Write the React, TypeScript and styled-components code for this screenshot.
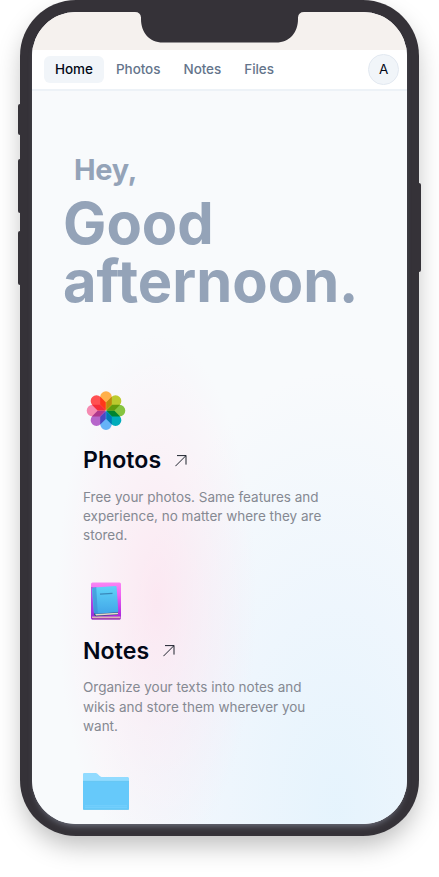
import React from "react";
import styled, { createGlobalStyle } from "styled-components";

const GlobalStyle = createGlobalStyle`
  * { box-sizing: border-box; }
  html, body { margin: 0; background: #fff; overflow: hidden; }
  body { font-family: Inter, "Liberation Sans", sans-serif; color: #020817; }
  h1, h2, p { margin: 0; }
`;

const Stage = styled.main`
  height: 877px;
  overflow: hidden;
`;

const Phone = styled.div`
  position: relative;
  width: 399px;
  height: 836px;
  margin: 0 20px;
  padding: 12px;
  border-radius: 56px;
  background: #353238;
  box-shadow: 0 12px 26px -3px rgba(0, 0, 0, 0.27);
`;

const SideButton = styled.span<{ $side: "left" | "right"; $top: number; $length: number }>`
  position: absolute;
  ${(p) => p.$side}: -2px;
  top: ${(p) => p.$top}px;
  width: 3px;
  height: ${(p) => p.$length}px;
  border-radius: ${(p) => (p.$side === "left" ? "2px 0 0 2px" : "0 2px 2px 0")};
  background: #353238;
`;

const Screen = styled.div`
  display: flex;
  flex-direction: column;
  height: 812px;
  overflow: hidden;
  border-radius: 44px;
  background: #f8fafc;
  box-shadow: 0 5px 6px -3px rgba(130, 135, 150, 0.75);
`;

const StatusBar = styled.div`
  flex: 0 0 38px;
  background: #f5f1ee;
`;

const Notch = styled.svg`
  position: absolute;
  left: 115px;
  top: 11px;
  width: 169px;
  height: 32px;
`;

const NavBar = styled.nav`
  display: flex;
  align-items: center;
  flex: 0 0 41px;
  padding: 0 8px 0 11.5px;
  background: #fff;
  border-bottom: 2px solid #edf2f7;
`;

const NavItem = styled.a<{ $active?: boolean }>`
  height: 27px;
  padding: 0 11.55px;
  border-radius: 6px;
  background: ${(p) => (p.$active ? "#f1f5f9" : "transparent")};
  color: ${(p) => (p.$active ? "#020817" : "#64748b")};
  font-size: 13.48px;
  font-weight: 500;
  line-height: 27px;
  letter-spacing: -0.05px;
`;

const Avatar = styled.div`
  width: 30.6px;
  height: 30.6px;
  margin-left: auto;
  border: 1px solid #e2e8f0;
  border-radius: 50%;
  background: #f1f5f9;
  font-size: 13.5px;
  line-height: 29px;
  text-align: center;
`;

const Content = styled.div`
  flex: 1;
  min-height: 0;
  overflow: hidden;
  padding: 60px 31px 0;
  background:
    radial-gradient(ellipse 100px 265px at 125px 508px, rgba(255, 220, 235, 0.6), rgba(255, 222, 236, 0.3) 50%, transparent 100%),
    radial-gradient(ellipse 235px 440px at 305px 720px, rgba(222, 241, 253, 0.72), rgba(226, 241, 254, 0.44) 48%, transparent 100%),
    #f8fafc;
`;

const Greeting = styled.header`
  height: 237px;
  color: #94a3b8;
`;

const Hello = styled.p`
  padding-left: 11px;
  font-size: 28.9px;
  font-weight: 700;
  line-height: 38px;
  letter-spacing: -0.01em;
`;

const DayPart = styled.h1`
  margin-top: 6px;
  font-size: 57.8px;
  font-weight: 700;
  line-height: 57.8px;
`;

const AppEntry = styled.section`
  height: 190.5px;
  padding-left: 20px;
`;

const IconSlot = styled.div`
  height: 46px;
  svg { display: block; }
`;

const TitleRow = styled.div`
  display: flex;
  align-items: center;
  gap: 14px;
  height: 31px;
  margin-top: 11px;
`;

const Title = styled.h2`
  font-size: 23.1px;
  font-weight: 600;
  line-height: 31px;
  letter-spacing: 0.06px;
`;

const Description = styled.p`
  width: 242px;
  margin-top: 11.8px;
  color: #858992;
  font-size: 13.5px;
  line-height: 19.25px;
`;

const PETALS = ["#ffb04a", "#bcca2e", "#86c440", "#00acbb", "#66b3f7", "#b666cb", "#f58bb2", "#ff5052"];

const IsolatedSvg = styled.svg`
  isolation: isolate;
`;

const Petal = styled.path`
  mix-blend-mode: multiply;
`;

const PhotosIcon = () => (
  <IsolatedSvg width="46" height="46" viewBox="0 0 46 46">
    {PETALS.map((color, i) => (
      <Petal
        key={color}
        d="M17.2 9.1a5.8 5.8 0 0 1 11.6 0V16.5L23 22.3L17.2 16.5Z"
        fill={color}
        transform={`rotate(${i * 45} 23 22.6)`}
      />
    ))}
  </IsolatedSvg>
);

const NotesIcon = () => (
  <svg width="46" height="46" viewBox="0 0 46 46">
    <defs>
      <linearGradient id="cover" x1="0" y1="0" x2="0" y2="1">
        <stop offset="0" stopColor="#fa86f4" />
        <stop offset=".35" stopColor="#ee62f2" />
        <stop offset="1" stopColor="#a11bdc" />
      </linearGradient>
      <linearGradient id="blue" x1="0" y1="0" x2="0" y2="1">
        <stop offset="0" stopColor="#5fd3f8" />
        <stop offset="1" stopColor="#42a5e8" />
      </linearGradient>
    </defs>
    <rect x="8" y="3.5" width="30" height="37" rx="1.5" fill="url(#cover)" />
    <path d="M8 8H13.5V37H8z" fill="#8a3bd8" opacity=".55" />
    <path d="M9 37.6h28.5v1.8H10q-1.5 0-1-1.8" fill="#d9b4b7" />
    <path d="M9 39.9h28" stroke="#7a237e" strokeWidth=".7" />
    <path d="M11 33l24-1.2v4L13 37.3q-2.2-.2-2-3.8" fill="#315279" />
    <path d="M12.2 35l22.8-1.2v1.5L13 36.6" fill="#e8d9cb" />
    <path d="M11 8.4l21.5-1.3q1-.1 1.1 1l1.7 24q0 1-1 1.1l-21 1.6q-2.5.2-2.6-1.8L9 10.5q0-2 2-2.1" fill="url(#blue)" />
    <path d="M9.2 9.2l4-.9 1.6 26.3-3.4.1z" fill="#3a8bd2" opacity=".6" />
    <path d="M17 15.1l12.5-.7" stroke="#3989ba" strokeWidth="1.2" />
  </svg>
);

const FolderIcon = () => (
  <svg width="46" height="46" viewBox="0 0 46 46">
    <path d="M0 5.2Q0 4 1.2 4h11.5q1 0 1.7.7l2.3 2.4q.8.8 1.8.8h26.3Q46 8 46 9.2V15H0z" fill="#91dbff" />
    <path d="M0 12.3h46v27.3q0 1.2-1.2 1.2H1.2Q0 40.8 0 39.6z" fill="#66c9fa" />
    <path d="M0 12.3h46M0 40.3h46" stroke="#5cbfed" strokeWidth=".6" />
    <path d="M2 36.8h42M2 38.7h42" stroke="#82d5ff" strokeWidth=".6" />
  </svg>
);

const ArrowIcon = () => (
  <svg width="12" height="12" viewBox="0 0 12 12" fill="none" stroke="#111722" strokeWidth=".95">
    <path d="M.4 11.2 10.9.7M2 .6h9v9" />
  </svg>
);

const NAV = ["Home", "Photos", "Notes", "Files"];

const ENTRIES = [
  {
    name: "Photos",
    icon: <PhotosIcon />,
    lines: ["Free your photos. Same features and", "experience, no matter where they are", "stored."],
  },
  {
    name: "Notes",
    icon: <NotesIcon />,
    lines: ["Organize your texts into notes and", "wikis and store them wherever you", "want."],
  },
  { name: "Files", icon: <FolderIcon />, lines: [] },
];

export default function App() {
  return (
    <Stage>
      <GlobalStyle />
      <Phone>
        <SideButton $side="left" $top={104} $length={31} />
        <SideButton $side="left" $top={159} $length={54} />
        <SideButton $side="left" $top={231} $length={54} />
        <SideButton $side="right" $top={183} $length={89} />
        <Screen>
          <StatusBar />
          <NavBar>
            {NAV.map((label, i) => (
              <NavItem key={label} $active={i === 0}>{label}</NavItem>
            ))}
            <Avatar>A</Avatar>
          </NavBar>
          <Content>
            <Greeting>
              <Hello>Hey,</Hello>
              <DayPart>Good<br />afternoon.</DayPart>
            </Greeting>
            {ENTRIES.map((entry) => (
              <AppEntry key={entry.name}>
                <IconSlot>{entry.icon}</IconSlot>
                {entry.lines.length > 0 && (
                  <>
                    <TitleRow>
                      <Title>{entry.name}</Title>
                      <ArrowIcon />
                    </TitleRow>
                    <Description>
                      {entry.lines.map((line) => (
                        <React.Fragment key={line}>{line}<br /></React.Fragment>
                      ))}
                    </Description>
                  </>
                )}
              </AppEntry>
            ))}
          </Content>
        </Screen>
        <Notch viewBox="0 0 169 32">
          <path d="M0 0H169V1Q163.5 1 163 6.5V8C163 21 155 31.5 141 31.5H28C14 31.5 6 21 6 8V6.5Q5.5 1 0 1Z" fill="#353238" />
        </Notch>
      </Phone>
    </Stage>
  );
}
